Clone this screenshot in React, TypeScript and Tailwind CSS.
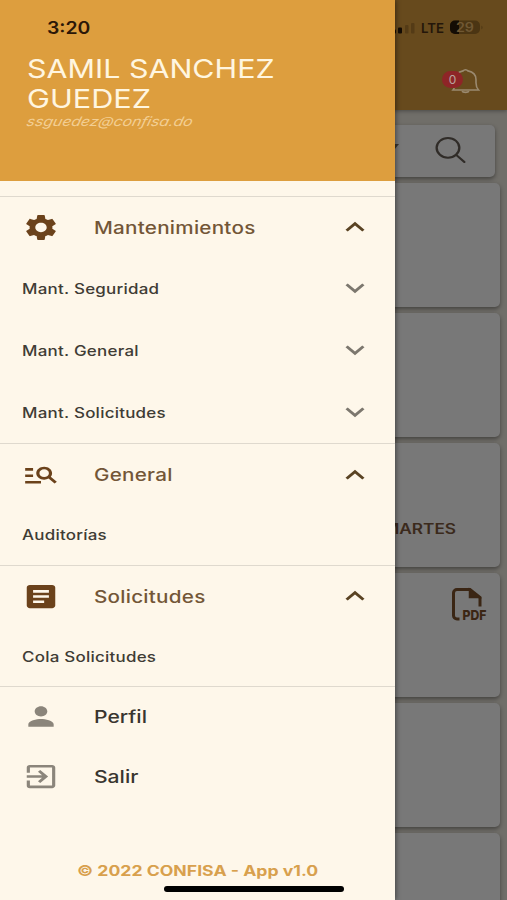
import type { ReactNode } from "react";
import type { IconType } from "react-icons";
import { IoSearchOutline } from "react-icons/io5";
import { MdArticle, MdExitToApp, MdExpandLess, MdExpandMore, MdManageSearch, MdPerson, MdSettings } from "react-icons/md";

interface SubItem {
  label: string;
  expandable?: boolean;
}

interface Section {
  title: string;
  icon: IconType;
  items: SubItem[];
  headerHeight: string;
  itemHeight: string;
}

const sections: Section[] = [
  {
    title: "Mantenimientos",
    icon: MdSettings,
    headerHeight: "h-[60px]",
    itemHeight: "h-[62px]",
    items: [
      { label: "Mant. Seguridad", expandable: true },
      { label: "Mant. General", expandable: true },
      { label: "Mant. Solicitudes", expandable: true },
    ],
  },
  {
    title: "General",
    icon: MdManageSearch,
    headerHeight: "h-[61px]",
    itemHeight: "h-[60px] pb-0.5",
    items: [{ label: "Auditorías" }],
  },
  {
    title: "Solicitudes",
    icon: MdArticle,
    headerHeight: "h-[60px]",
    itemHeight: "h-[60px]",
    items: [{ label: "Cola Solicitudes" }],
  },
];

function Wide({ className = "scale-x-[1.21]", children }: { className?: string; children: ReactNode }) {
  return <span className={`inline-block origin-left whitespace-nowrap ${className}`}>{children}</span>;
}

function MenuSection({ section }: { section: Section }) {
  const Icon = section.icon;
  return (
    <div className="border-t border-[#dfd9ce]">
      <div className={`flex items-center pl-[22px] pr-[21px] ${section.headerHeight}`}>
        <Icon preserveAspectRatio="none" className="h-[31px] w-[38px] text-[#6b421b]" />
        <div className="ml-[34px] flex-1 pt-[3px] text-[17px] font-medium tracking-[0.2px] text-[#735637]">
          <Wide className="scale-x-[1.215]">{section.title}</Wide>
        </div>
        <MdExpandLess preserveAspectRatio="none" className="h-8 w-[38px] text-[#5a4323]" />
      </div>
      {section.items.map((item) => (
        <div key={item.label} className={`flex items-center pl-[22px] pr-[21px] ${section.itemHeight}`}>
          <div className="flex-1 text-[14px] font-medium tracking-[0.2px] text-[#403c35]">
            <Wide>{item.label}</Wide>
          </div>
          {item.expandable && (
            <MdExpandMore preserveAspectRatio="none" className="h-8 w-[38px] text-[#7c776e]" />
          )}
        </div>
      ))}
    </div>
  );
}

function MenuLink({ icon: Icon, label }: { icon: IconType; label: string }) {
  return (
    <div className="flex h-[60px] items-center pb-0.5 pl-[22px]">
      <Icon preserveAspectRatio="none" className="mr-[34px] h-[31px] w-[38px] text-[#8b857b]" />
      <div className="pt-[3px] text-[17px] font-medium text-[#39352f]">
        <Wide className="scale-x-[1.24]">{label}</Wide>
      </div>
    </div>
  );
}

function Drawer() {
  return (
    <aside className="absolute inset-y-0 left-0 flex w-[395px] flex-col bg-[#fef7ea] shadow-[1px_0_5px_rgba(0,0,0,0.45)]">
      <header className="h-[181px] bg-[#dd9e3e]">
        <div className="pl-[47px] pt-[18px] text-[17px] font-semibold leading-[20px] text-[#2b1707]">
          <Wide className="scale-x-[1.14]">3:20</Wide>
        </div>
        <div className="pl-[27px] pt-[16px] text-[26px] leading-[30px] text-[#fff6e0]">
          <Wide className="scale-x-[1.17]">SAMIL SANCHEZ</Wide>
          <br />
          <Wide className="scale-x-[1.18]">GUEDEZ</Wide>
        </div>
        <div className="pl-[27px] text-[13px] italic leading-[15px] text-[#f3cf94]">
          <Wide className="-skew-x-12 scale-x-[1.21]">ssguedez@confisa.do</Wide>
        </div>
      </header>
      <nav className="mt-[15px]">
        {sections.map((section) => (
          <MenuSection key={section.title} section={section} />
        ))}
        <div className="border-t border-[#dfd9ce]">
          <MenuLink icon={MdPerson} label="Perfil" />
          <MenuLink icon={MdExitToApp} label="Salir" />
        </div>
      </nav>
      <footer className="mb-[19px] mt-auto pl-[77px] text-[14px] font-bold leading-[20px] text-[#d8a04d]">
        <Wide className="scale-x-[1.26]">© 2022 CONFISA - App v1.0</Wide>
      </footer>
    </aside>
  );
}

function StatusIcons() {
  return (
    <svg className="ml-auto mr-[22px] h-4 w-[93px]" viewBox="0 0 93 16">
      <rect x="0" y="10.500" width="4" height="4" rx="1" fill="#140c04" />
      <rect x="6" y="8.500" width="4" height="6" rx="1" fill="#140c04" />
      <rect x="13" y="6" width="3.500" height="8.500" rx="1" fill="#543b16" />
      <rect x="19" y="4" width="3.500" height="10.500" rx="1" fill="#543b16" />
      <text x="29" y="13.500" textLength="23" lengthAdjust="spacingAndGlyphs" fontSize="13" fontWeight="600" fill="#24160a">LTE</text>
      <rect x="58" y="1.500" width="30" height="13.500" rx="5" fill="#4b3513" />
      <path d="M63 1.500h4V15h-4a5 5 0 0 1-5-5V6.500a5 5 0 0 1 5-5z" fill="#140c04" />
      <path d="M89.500 6.500q2 2 0 4z" fill="#4b3513" />
      <text x="64" y="13" textLength="18" lengthAdjust="spacingAndGlyphs" fontSize="12.500" fontWeight="600" fill="#705833">29</text>
    </svg>
  );
}

function BellIcon() {
  return (
    <svg className="h-[29px] w-[35px]" viewBox="0 0 35 29" fill="none" stroke="#9b8a70" strokeWidth="1.600">
      <path d="M5 24h25.500c-2-2.300-2.500-4-2.500-7.300v-3c0-5-3.500-8-8-8.800-1.200-1.600-3.800-1.600-5 0-4.500.8-7.500 3.800-7.500 8.800v3c0 3.300-.5 5-2.500 7.300z" />
      <path d="M14 25.200c1 1.500 6 1.500 7 0" />
    </svg>
  );
}

function PdfIcon() {
  return (
    <svg className="h-[38px] w-10" viewBox="0 0 40 38" fill="none">
      <path d="M8.500 32H6a3.500 3.500 0 0 1-3.500-3.500V6A3.500 3.500 0 0 1 6 2.500h13L29 10.500v9" stroke="#3b2614" strokeWidth="3" />
      <path d="M18.500 2v8.500h10.500z" fill="#3b2614" stroke="#3b2614" strokeWidth="1.500" />
      <text x="11.500" y="33" textLength="24" lengthAdjust="spacingAndGlyphs" fontSize="13.500" fontWeight="800" fill="#3b2614">PDF</text>
    </svg>
  );
}

function Card({ className = "", children }: { className?: string; children?: ReactNode }) {
  return (
    <div className={`shrink-0 rounded-[5px] bg-[#787878] shadow-[0_2px_4px_rgba(0,0,0,0.4)] ${className}`}>
      {children}
    </div>
  );
}

function Backdrop() {
  return (
    <div className="flex h-full flex-col bg-[#706e69]">
      <div className="h-[110px] shrink-0 bg-[#674a1d] pt-[19px] shadow-[0_1px_4px_rgba(0,0,0,0.35)]">
        <StatusIcons />
        <div className="relative ml-[448px] mt-[31px] h-[29px] w-[35px]">
          <BellIcon />
          <span className="absolute -left-1.5 top-[5px] flex h-[17px] w-[21px] items-center justify-center rounded-full bg-[#8e2527] text-[12px] text-[#b9a5a0]">
            0
          </span>
        </div>
      </div>
      <Card className="mr-3 mt-[15px] flex h-[52px] items-center justify-end pr-[26px]">
        <svg className="mb-2 mr-[33px] h-1.5 w-2.5" viewBox="0 0 10 6">
          <path d="M0 0h10L5 6z" fill="#393530" />
        </svg>
        <IoSearchOutline preserveAspectRatio="none" className="mb-0.5 h-8 w-[37px] text-[#302c28]" />
      </Card>
      <Card className="mr-[7px] mt-[6px] h-[124px]" />
      <Card className="mr-[7px] mt-[6px] h-[124px]" />
      <Card className="mr-[7px] mt-[6px] flex h-[124px] justify-end pr-[44px] pt-[76px] text-[14px] font-semibold leading-[20px] text-[#3b2a1c]">
        <span className="inline-block origin-right scale-x-[1.23]">MARTES</span>
      </Card>
      <Card className="mr-[7px] mt-[6px] flex h-[124px] justify-end pr-[9px] pt-[14px]">
        <PdfIcon />
      </Card>
      <Card className="mr-[7px] mt-[6px] h-[124px]" />
      <Card className="mr-[7px] mt-[6px] h-[124px]" />
    </div>
  );
}

export default function App() {
  return (
    <div className="relative h-[900px] w-[507px] overflow-hidden font-['Inter',sans-serif]">
      <Backdrop />
      <Drawer />
      <div className="absolute bottom-[8px] left-[164px] h-[6px] w-[180px] rounded-full bg-black" />
    </div>
  );
}
